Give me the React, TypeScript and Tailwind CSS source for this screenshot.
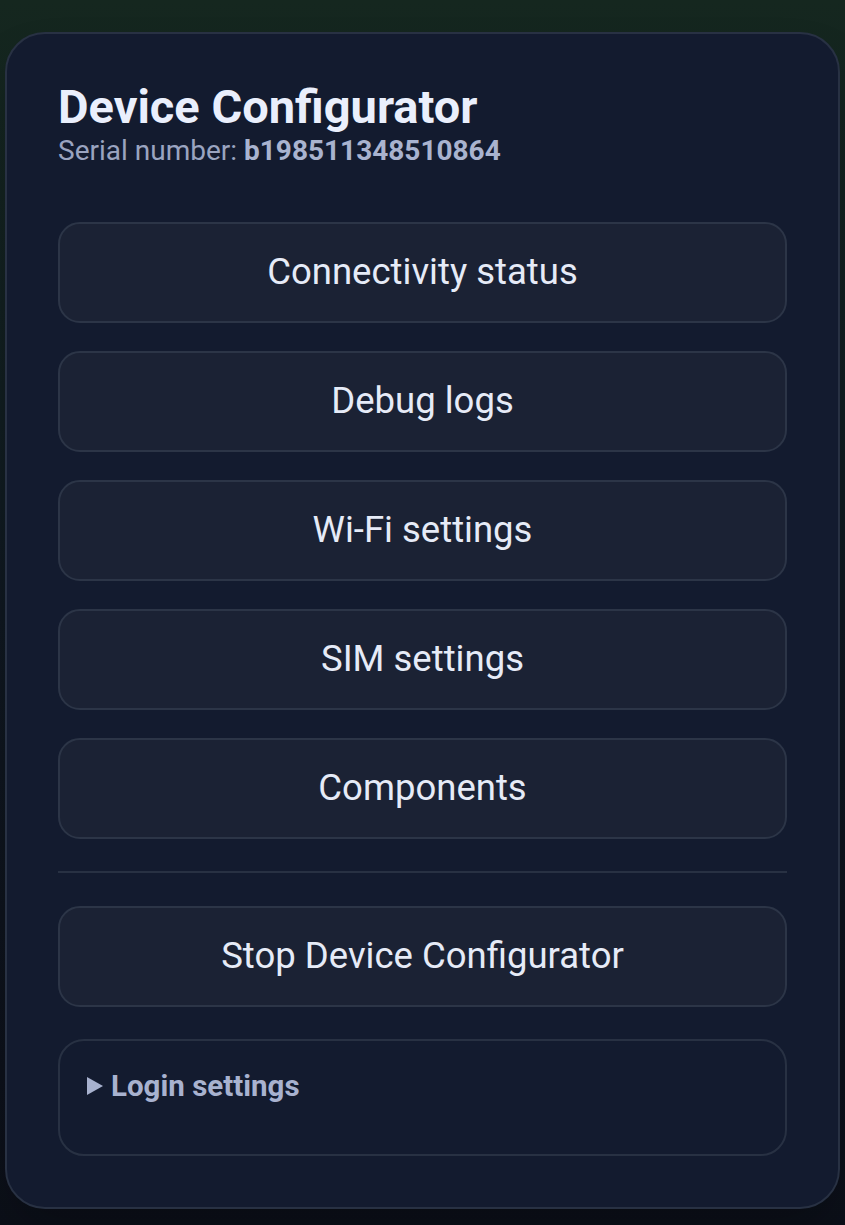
const actions = [
  'Connectivity status',
  'Debug logs',
  'Wi-Fi settings',
  'SIM settings',
  'Components',
]

function ActionButton({ label }: { label: string }) {
  return (
    <button className="h-[101px] w-full rounded-[22px] border-2 border-[#2c3547] bg-[#1b2234] text-[36.5px] text-[#e6ebf7]">
      {label}
    </button>
  )
}

export default function App() {
  return (
    <div
      className="min-h-[1225px] bg-gradient-to-b from-[#15271f] via-[#0f1720] to-[#0b0f18] px-[5px] pt-[32px] pb-[18px]"
      style={{ fontFamily: 'Roboto, "Noto Sans", sans-serif' }}
    >
      <div className="rounded-[40px] border-2 border-[#283143] bg-[#131b2f] px-[51px] pt-[46px] pb-[51px] shadow-2xl">
        <h1 className="text-[47px] font-bold leading-[54px] text-[#eaeffc]">Device Configurator</h1>
        <p className="text-[28px] leading-[34px] text-[#9aa4c0]">
          Serial number: <span className="font-bold text-[#a9b3cf]">b198511348510864</span>
        </p>

        <div className="mt-[54px] flex flex-col gap-[28px]">
          {actions.map((label) => (
            <ActionButton key={label} label={label} />
          ))}
        </div>

        <hr className="mt-[32px] mb-[33px] border-t-2 border-[#283143]" />

        <ActionButton label="Stop Device Configurator" />

        <details className="mt-[32px] h-[117px] rounded-[26px] border-2 border-[#283143] px-[27px] pt-[23px]">
          <summary className="flex cursor-pointer list-none items-center gap-[8px] text-[29.5px] font-bold text-[#a8b2cf] [&::-webkit-details-marker]:hidden">
            <svg width="16" height="18" viewBox="0 0 16 18" className="shrink-0">
              <polygon points="0,0 16,9 0,18" fill="#a8b2cf" />
            </svg>
            Login settings
          </summary>
        </details>
      </div>
    </div>
  )
}
